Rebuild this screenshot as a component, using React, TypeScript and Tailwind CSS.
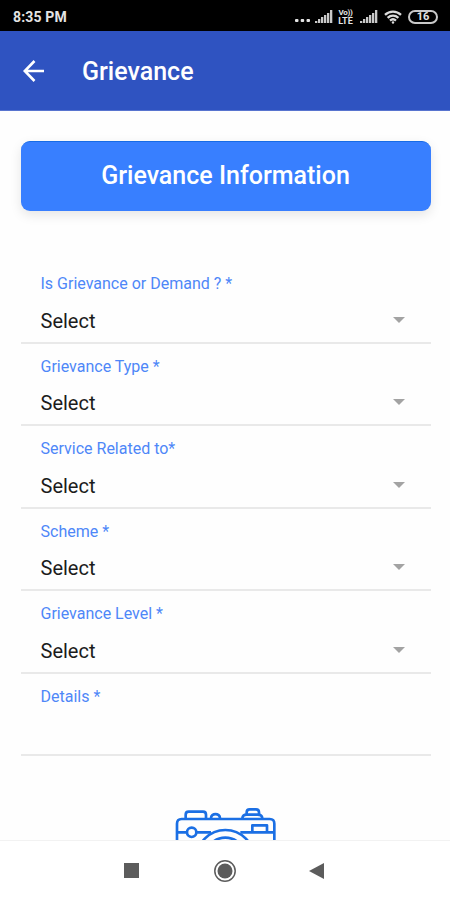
const fields = [
  { label: "Is Grievance or Demand ? *", value: "Select" },
  { label: "Grievance Type *", value: "Select" },
  { label: "Service Related to*", value: "Select" },
  { label: "Scheme *", value: "Select" },
  { label: "Grievance Level *", value: "Select" },
  { label: "Details *", value: "" },
];

function SignalIcon() {
  return (
    <svg width="18" height="14" viewBox="0 0 18 14" fill="#c9c9c9">
      <rect x="0" y="11" width="2.300" height="2" />
      <rect x="3" y="9" width="2.300" height="4" />
      <rect x="6" y="7" width="2.300" height="6" />
      <rect x="9" y="5" width="2.300" height="8" />
      <rect x="12" y="3" width="2.300" height="10" />
      <rect x="15" y="0" width="2.300" height="13" />
    </svg>
  );
}

function StatusBar() {
  return (
    <div className="flex h-[31px] shrink-0 items-center bg-black pl-[13px] pr-[12px] pt-[2px] text-[#e4e4e4]">
      <span className="text-[14px] font-bold leading-4 tracking-[0.15px]">8:35 PM</span>

      <div className="ml-auto flex items-center">
        <svg width="16" height="14" viewBox="0 0 16 14" fill="#e4e4e4" className="mr-[4px]">
          <rect x="0" y="9" width="3.500" height="3" rx="1" />
          <rect x="5.700" y="9" width="3.500" height="3" rx="1" />
          <rect x="11.500" y="9" width="3.500" height="3" rx="1" />
        </svg>
        <SignalIcon />
        <div className="ml-[4px] mr-[6px] flex w-[17px] flex-col items-center text-[9px] font-bold leading-[8px]">
          <div className="h-[8px] text-[8px] tracking-[-0.3px]">Vo))</div>
          <div className="h-[8px]">LTE</div>
        </div>
        <SignalIcon />
        <svg width="18" height="14" viewBox="0 0 18 14" fill="none" stroke="#dcdcdc" strokeWidth="2.3" className="ml-[6px] mr-[6px]">
          <path d="M1 4.800C5.500 0.500 12.500 0.500 17 4.800" />
          <path d="M3.600 7.900C6.800 5 11.200 5 14.400 7.900" />
          <path d="M6 10.700C7.800 9 10.200 9 12 10.700" />
          <circle cx="9" cy="12.500" r="1.200" fill="#dcdcdc" stroke="none" />
        </svg>
        <div className="flex h-[14px] w-[30px] items-center justify-center rounded-full border-2 border-[#c9c9c9] text-[11px] font-bold leading-none">
          16
        </div>
      </div>
    </div>
  );
}

function Header() {
  return (
    <header className="flex h-[80px] shrink-0 items-center border-b border-[#5874cf] bg-[#2f53c1] pl-[22px] text-white">
      <svg width="24" height="24" viewBox="0 0 24 24" fill="none" stroke="currentColor" strokeWidth="2.6">
        <path d="M22 12H3M12.500 2L2.800 12L12.500 22" />
      </svg>
      <h1 className="ml-[36px] pt-[2px] text-[25px] font-medium leading-8">Grievance</h1>
    </header>
  );
}

function Field({ label, value }: { label: string; value: string }) {
  return (
    <div className="h-[82.5px] border-b-2 border-[#e9e9e9] pl-[20px] pt-[11px]">
      <div className="text-[16px] leading-6 text-[#4e87f8]">{label}</div>
      {value && (
        <div className="mt-[10.5px] flex items-center justify-between pr-[26px]">
          <span className="text-[20px] leading-7 text-[#1c1c1c]">{value}</span>
          <svg width="12" height="6" viewBox="0 0 12 6" fill="#a3a3a3" className="-mt-[2px]">
            <path d="M0 0H12L6 6Z" />
          </svg>
        </div>
      )}
    </div>
  );
}

function CameraIcon() {
  return (
    <svg width="130" height="90" viewBox="0 0 390 270" fill="none" stroke="#1b6fe4" strokeWidth="8" strokeLinejoin="round">
      <path d="M51 250V86Q51 72 65 72H329Q343 72 343 86V250" />
      <path d="M77 70V59Q77 50 86 50H129Q138 50 138 59V70" />
      <path d="M153 70C153 53 180 53 180 70" />
      <path d="M247 70Q248 59 260 59H293Q306 59 307 70" />
      <path d="M260 57V52Q260 43 269 43H288Q297 43 297 52V57" />
      <path d="M53 112H80M110 112H153M241 112H341" />
      <circle cx="95" cy="112" r="14" />
      <path d="M277 110V91H321V110" />
      <circle cx="196" cy="191" r="86" />
      <circle cx="196" cy="188" r="60" />
    </svg>
  );
}

function NavigationBar() {
  return (
    <nav className="flex h-[60px] shrink-0 items-center justify-between border-t border-[#f2f2f2] bg-white pl-[124px] pr-[126px]">
      <div className="h-[15px] w-[15px] bg-[#5c5c5c]" />
      <svg width="24" height="24" viewBox="0 0 24 24" className="ml-[1px]">
        <circle cx="12" cy="12" r="10.200" fill="none" stroke="#5c5c5c" strokeWidth="1.5" />
        <circle cx="12" cy="12" r="7.500" fill="#5c5c5c" />
      </svg>
      <svg width="15" height="16" viewBox="0 0 15 16" fill="#5c5c5c">
        <path d="M0 8L15 0V16Z" />
      </svg>
    </nav>
  );
}

export default function App() {
  return (
    <div className="flex h-[900px] w-[450px] flex-col overflow-hidden bg-white font-[Roboto,sans-serif]">
      <StatusBar />
      <Header />

      <main className="h-[729px] shrink-0 overflow-hidden bg-[#fefefe] pl-[20.5px] pr-[19.5px] pt-[30px]">
        <button className="flex h-[70px] w-full items-center justify-center rounded-[9px] border-t border-[#176be5] bg-[#387fff] pb-[1px] text-[25px] font-medium text-white shadow-[0_4px_12px_rgba(0,0,0,0.1)]">
          Grievance Information
        </button>

        {/* Form */}
        <div className="mt-[50px]">
          {fields.map((field) => (
            <Field key={field.label} label={field.label} value={field.value} />
          ))}
        </div>

        <div className="mt-[39px] pl-[139px]">
          <CameraIcon />
        </div>
      </main>

      <NavigationBar />
    </div>
  );
}
